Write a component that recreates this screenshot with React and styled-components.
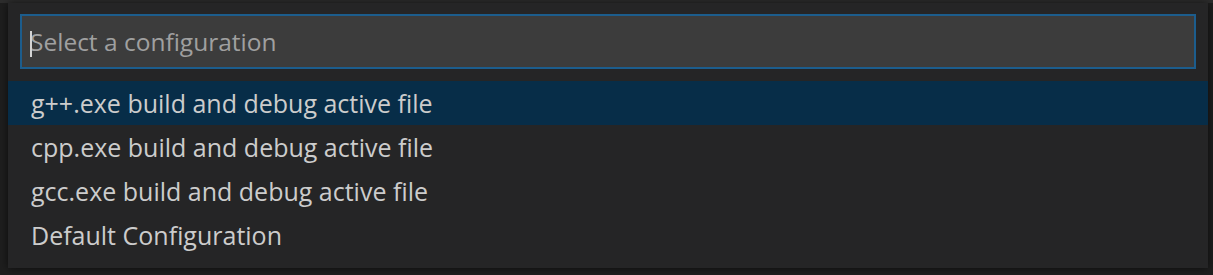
import React from "react"
import styled, { createGlobalStyle } from "styled-components"

const GlobalStyle = createGlobalStyle`
  html, body {
    margin: 0;
    padding: 0;
    background: #1b1b1b;
    font-family: "Open Sans", "Noto Sans", sans-serif;
  }
`

const items = [
  "g++.exe build and debug active file",
  "cpp.exe build and debug active file",
  "gcc.exe build and debug active file",
  "Default Configuration",
]

// quick pick dropdown
const App = () => {
  return (
    <Page>
      <GlobalStyle />
      <TopStrip />
      <Picker>
        <InputWrap>
          <Caret />
          <Input placeholder="Select a configuration" readOnly />
        </InputWrap>
        <List>
          {items.map((item, index) => (
            <Row key={index} selected={index === 0}>
              {item}
            </Row>
          ))}
        </List>
      </Picker>
    </Page>
  )
}

export default App

const Page = styled.div`
  width: 1213px;
  height: 275px;
  background: #1e1e1e;
  overflow: hidden;
`

const TopStrip = styled.div`
  height: 3px;
  background: #2d2d2d;
`

const Picker = styled.div`
  width: 1200px;
  margin-left: 8px;
  height: 265px;
  background: #252526;
  box-shadow: 0 0 8px rgba(0, 0, 0, 0.6);
  padding: 11px 12px 0 12px;
  box-sizing: border-box;
`

const InputWrap = styled.div`
  position: relative;
  height: 55px;
  box-sizing: border-box;
  border: 2px solid #1c5d8d;
  background: #3c3c3c;
  display: flex;
  align-items: center;
  width: 1176px;
`

const Caret = styled.span`
  position: absolute;
  left: 8px;
  top: 15px;
  width: 2px;
  height: 26px;
  background: #d4d4d4;
`

const Input = styled.input`
  flex: 1;
  border: none;
  outline: none;
  background: transparent;
  color: #cccccc;
  font-family: "Open Sans", "Noto Sans", sans-serif;
  font-size: 24.5px;
  padding: 0 0 0 8px;
  height: 100%;

  &::placeholder {
    color: #a0a0a0;
  }
`

const List = styled.div`
  margin: 12px -12px 0 -12px;
  display: flex;
  flex-direction: column;
`

const Row = styled.div`
  height: 44px;
  display: flex;
  align-items: center;
  padding-left: 23px;
  font-size: 25px;
  color: #cccccc;
  background: ${props => (props.selected ? "#072d48" : "transparent")};
`
